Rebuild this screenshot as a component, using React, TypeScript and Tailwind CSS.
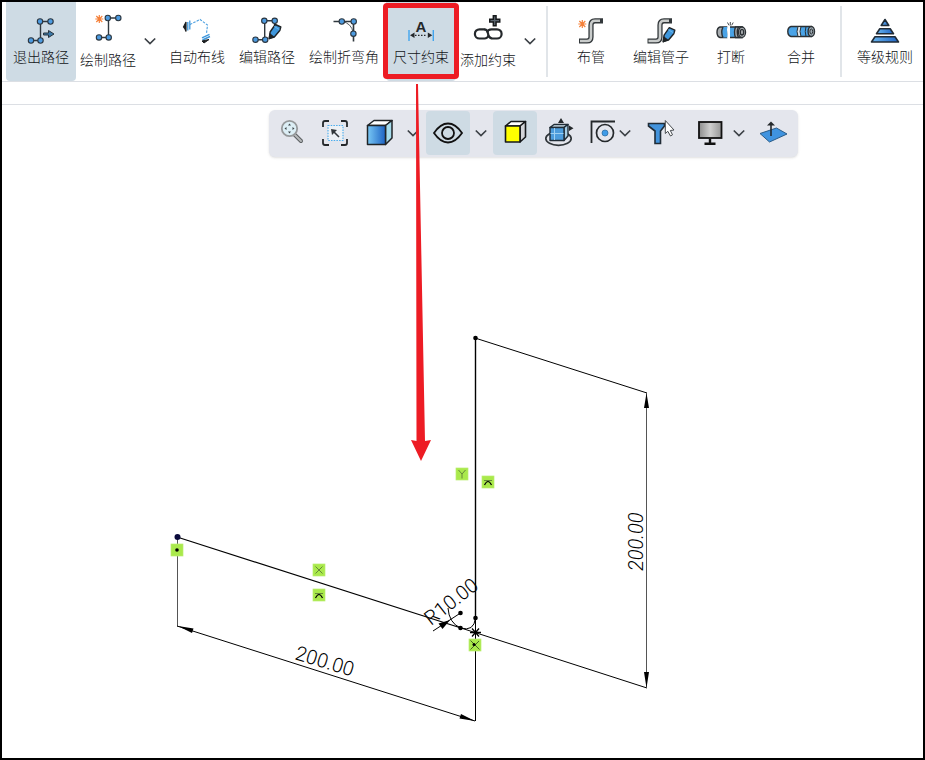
import type { ReactNode } from "react";

function Node({ x, y }: { x: number; y: number }) {
  return <circle cx={x} cy={y} r="2.7" fill="#4d9be0" stroke="#2b3640" strokeWidth="1.1" />;
}

function Spark({ x, y }: { x: number; y: number }) {
  return (
    <path
      transform={`translate(${x} ${y})`}
      d="M0-4V4M-4 0H4M-3-3L3 3M-3 3L3-3"
      stroke="#f5813a"
      strokeWidth="1.2"
    />
  );
}

function Pencil({ x, y }: { x: number; y: number }) {
  return (
    <g transform={`translate(${x} ${y})`} stroke="#1f2326" strokeWidth="1.4" strokeLinejoin="round">
      <path d="M0 0L.8-6.500L6-14L11.500-11.500L10.500-8L5-1.500Z" fill="#3f97dc" />
      <path d="M0 0L.6-4.500L4-1.800Z" fill="#1f2326" />
      <path d="M5-12L10-9" stroke="#6db9ef" strokeWidth="1" />
    </g>
  );
}

function Chevron() {
  return (
    <svg className="h-3 w-3" viewBox="0 0 12 12" fill="none" stroke="#3c4146" strokeWidth="1.7">
      <path d="M.8 3.500L6 8.500L11.200 3.500" />
    </svg>
  );
}

function Icon({ children }: { children: ReactNode }) {
  return (
    <svg className="h-8 w-8 shrink-0" viewBox="0 0 32 32" fill="none" aria-hidden="true">
      {children}
    </svg>
  );
}

function ToolButton({
  label,
  icon,
  width = "w-[70px]",
  active,
  marked,
  menu,
}: {
  label: string;
  icon: ReactNode;
  width?: string;
  active?: boolean;
  marked?: boolean;
  menu?: boolean;
}) {
  return (
    <div className="relative flex shrink-0">
      <button
        className={`flex flex-col items-center rounded-b pt-3 ${width} ${active ? "bg-[#cedbe4]" : ""} ${menu ? "gap-[3px]" : ""}`}
      >
        <Icon>{icon}</Icon>
        <span className="whitespace-nowrap text-sm leading-5">{label}</span>
      </button>
      {menu && (
        <button aria-label={`${label}选项`} className="flex w-5 items-center justify-center pb-0.5">
          <Chevron />
        </button>
      )}
      {marked && (
        <div className="pointer-events-none absolute -inset-x-[3px] top-px bottom-0.5 rounded-sm border-5 border-[#ed1c24]" />
      )}
    </div>
  );
}

function ViewButton({
  label,
  width = "w-11",
  active,
  children,
}: {
  label: string;
  width?: string;
  active?: boolean;
  children: ReactNode;
}) {
  return (
    <button
      aria-label={label}
      className={`flex h-11 shrink-0 items-center justify-center rounded-sm ${width} ${active ? "bg-[#cedbe4]" : ""}`}
    >
      {children}
    </button>
  );
}

function Badge({ x, y, children }: { x: number; y: number; children: ReactNode }) {
  return (
    <g transform={`translate(${x} ${y})`}>
      <rect width="12" height="12" fill="#a9e94b" stroke="#b9ed70" strokeWidth=".7" />
      {children}
    </g>
  );
}

function Ribbon() {
  return (
    <header className="flex h-20 border-b border-[#dcdfe4] pl-1">
      <div className="flex pr-1.5">
        <ToolButton
          label="退出路径"
          active
          icon={
            <>
              <path d="M25 7.500H15.500V26.500H6" stroke="#30383e" strokeWidth="1.4" />
              <Node x={15} y={7.5} />
              <Node x={25.5} y={7.5} />
              <Node x={6} y={26.5} />
              <Node x={15.5} y={26.5} />
              <path d="M18.500 19h5v-2.500l5.500 3.500l-5.500 3.500v-2.500h-5z" fill="#3a78a8" stroke="#28343d" strokeWidth="1" />
            </>
          }
        />
        <ToolButton
          label="绘制路径"
          width="w-16"
          menu
          icon={
            <>
              <path d="M26 4H16.500V23.500H7" stroke="#30383e" strokeWidth="1.4" />
              <Node x={15.8} y={4} />
              <Node x={26.3} y={4} />
              <Node x={7} y={23.4} />
              <Node x={16.7} y={23.4} />
              <Spark x={7.3} y={5} />
            </>
          }
        />
        <div className="w-0.5" />
        <ToolButton
          label="自动布线"
          icon={
            <>
              <path d="M9 10.500L19 5.500L26.500 11L25.500 19.500" stroke="#4a9fe0" strokeWidth="1.1" strokeDasharray="2.500 1.200" />
              <path d="M6.800 8V16.500M8.800 6.500V15.500" stroke="#3f97dc" strokeWidth="1.300" />
              <path d="M2.500 13L5 8V17.500L4 15Z" fill="#1c1f21" stroke="#1c1f21" strokeWidth="1.2" />
              <path d="M21 23.800L28.500 20.300M21.500 26L29 22.500" stroke="#3f97dc" strokeWidth="1.4" />
              <path d="M21 27L28 25.500L23 29Z" fill="#1c1f21" stroke="#1c1f21" strokeWidth="1" />
            </>
          }
        />
        <ToolButton
          label="编辑路径"
          icon={
            <>
              <path d="M23.500 6.800H13.700V25.700H4.500M23.500 7V11" stroke="#30383e" strokeWidth="1.4" />
              <Node x={13.3} y={6.8} />
              <Node x={23.7} y={6.8} />
              <Node x={4.5} y={25.7} />
              <Node x={14.2} y={25.7} />
              <Pencil x={18.3} y={24.5} />
            </>
          }
        />
        <ToolButton
          label="绘制折弯角"
          width="w-[84px]"
          icon={
            <>
              <path d="M5.500 7.500H25.500V27.500" stroke="#30383e" strokeWidth="1.6" />
              <path d="M14 7.500Q23.500 9 25.300 19" stroke="#555d63" strokeWidth="1" />
              <Node x={13.8} y={7.5} />
              <Node x={25.7} y={7.5} />
              <Node x={25.4} y={19.7} />
            </>
          }
        />
        <ToolButton
          label="尺寸约束"
          active
          marked
          icon={
            <>
              <text x="16" y="18" textAnchor="middle" fontSize="15" fontWeight="700" fontFamily="Liberation Sans, sans-serif" fill="#24282b">
                A
              </text>
              <path d="M4 16V27M28.300 16V27" stroke="#42a5ee" strokeWidth="1.4" />
              <path d="M10 21.300H22" stroke="#24282b" strokeWidth="1.2" strokeDasharray="1.500 1.500" />
              <path d="M5 21.300L9.500 18.500V24ZM27.300 21.300L22.800 18.500V24Z" fill="#24282b" />
            </>
          }
        />
        <ToolButton
          label="添加约束"
          width="w-16"
          menu
          icon={
            <>
              <path d="M22.700 1V12.500M17 6.700H28.500" stroke="#16191b" strokeWidth="4.200" />
              <path d="M22.700 2.500V11M18.500 6.700H27" stroke="#5b6670" strokeWidth="1.2" />
              <g stroke="#24282b" strokeWidth="2.200">
                <path d="M12.500 15.300H7.500A4.600 4.600 0 0 0 7.500 24.500H12.500Q15.500 24.500 16.500 21.500" />
                <path d="M19.500 24.500H25A4.600 4.600 0 0 0 25 15.300H19.500Q16 15.300 15 18.500" />
                <path d="M12 15.300Q15.500 15.300 16 19.500T20 24.500" />
              </g>
            </>
          }
        />
      </div>
      <div className="my-1 w-0.5 bg-[#e1e5e9]" />
      <div className="flex pr-1 pl-2">
        <ToolButton
          label="布管"
          icon={
            <>
              <path d="M4 27H12Q16 27 16 23V11Q16 6.800 20 6.800H28" stroke="#33383b" strokeWidth="5.2" />
              <path d="M5 27H12Q16 27 16 23V11Q16 6.800 20 6.800H25" stroke="#c9cccb" strokeWidth="2.600" />
              <Spark x={7.3} y={10} />
            </>
          }
        />
        <ToolButton
          label="编辑管子"
          icon={
            <>
              <path d="M2.500 27H11Q15 27 15 23V11Q15 6.800 19 6.800H27" stroke="#33383b" strokeWidth="5.2" />
              <path d="M3.500 27H11Q15 27 15 23V11Q15 6.800 19 6.800H24" stroke="#c9cccb" strokeWidth="2.600" />
              <Pencil x={18.3} y={27.7} />
            </>
          }
        />
        <ToolButton
          label="打断"
          icon={
            <>
              <g stroke="#2b3034" strokeWidth="1.400">
                <path d="M12.500 13H5Q2 14 2 18.200Q2 22.500 5 23.500H12.500" fill="#a8adb0" />
                <path d="M13 13H8Q5.500 18.200 8 23.500H13L12 18.500Z" fill="#4aa3e6" stroke="none" />
                <path d="M8 13Q5.500 18.200 8 23.500" />
                <path d="M15 13H27V23.500H15" fill="#4aa3e6" />
                <path d="M20.500 13H27V23.500H20.500Q18.500 18.200 20.500 13Z" fill="#a8adb0" />
                <path d="M23.500 13Q21 18.200 23.500 23.500" />
                <ellipse cx="27" cy="18.200" rx="3.500" ry="5.200" fill="#b9bdc0" />
                <ellipse cx="27" cy="18.200" rx="1.600" ry="2.800" />
              </g>
              <path d="M13.500 12L12.800 16L14 19L13 24.500" stroke="#fff" strokeWidth="1.600" />
              <path d="M15.300 8V11.500M12.500 8.500L14 11.300M18.200 8.500L16.700 11.300" stroke="#44494d" strokeWidth="1" />
            </>
          }
        />
        <ToolButton
          label="合并"
          icon={
            <g stroke="#2b3034" strokeWidth="1.400">
              <path d="M6 12.500H26V22.500H6Q2.800 21.500 2.800 17.500Q2.800 13.500 6 12.500Z" fill="#4aa3e6" />
              <path d="M13 12.500Q11 17.500 13 22.500H16Q14 17.500 16 12.500Z" fill="#e3e7e9" strokeWidth="1" />
              <path d="M21 12.500Q19.500 17.500 21 22.500" strokeWidth="1" />
              <ellipse cx="26.300" cy="17.500" rx="3.200" ry="5" fill="#9da9b2" />
              <ellipse cx="26.300" cy="17.500" rx="1.400" ry="2.500" strokeWidth="1" />
            </g>
          }
        />
      </div>
      <div className="my-1 w-0.5 bg-[#e1e5e9]" />
      <div className="flex pl-2">
        <ToolButton
          label="等级规则"
          icon={
            <>
              <defs>
                <linearGradient id="level">
                  <stop offset="0" stopColor="#6cb8f0" />
                  <stop offset="1" stopColor="#2064c4" />
                </linearGradient>
              </defs>
              <g fill="url(#level)" stroke="#202b36" strokeWidth="1.600" strokeLinejoin="round">
                <path d="M16 5.500L19.800 11.500H12.200Z" />
                <path d="M10.800 14.800H21.200L24.500 19.800H7.500Z" />
                <path d="M6 22.800H26L29.500 28H2.500Z" />
              </g>
            </>
          }
        />
      </div>
    </header>
  );
}

function ViewBar() {
  return (
    <div className="relative z-10 ml-[267px] flex w-[529px] rounded-md bg-[#e4e6ed] pt-px pb-0.5 shadow-sm">
      <ViewButton label="缩放">
        <Icon>
          <path d="M20 18L26 24" stroke="#5b5f61" strokeWidth="4" strokeLinecap="round" />
          <path d="M20 18L26 24" stroke="#b7babb" strokeWidth="2" strokeLinecap="round" />
          <circle cx="14.500" cy="11.500" r="7.700" fill="#dceef5" stroke="#96999b" strokeWidth="1.800" />
          <path d="M14.500 6.500L16 8.500H13ZM14.500 16.500L16 14.500H13ZM9.500 11.500L11.500 10V13ZM19.500 11.500L17.500 10V13Z" fill="#3e464b" />
        </Icon>
      </ViewButton>
      <ViewButton label="适合窗口">
        <Icon>
          <path
            d="M4 10V6Q4 4 6 4H10M22 4H26Q28 4 28 6V10M28 22V26Q28 28 26 28H22M10 28H6Q4 28 4 26V22"
            stroke="#24282b"
            strokeWidth="1.800"
          />
          <rect x="9" y="8.500" width="15" height="15" fill="#edf1f5" stroke="#4aaced" strokeWidth="1.100" strokeDasharray="1.500 1.200" />
          <path d="M15 15L20 20" stroke="#33383b" strokeWidth="1.600" />
          <path d="M12 12L18 13L13 18Z" fill="#33383b" />
        </Icon>
      </ViewButton>
      <ViewButton label="显示样式">
        <Icon>
          <defs>
            <linearGradient id="front">
              <stop offset="0" stopColor="#79c8f5" />
              <stop offset="1" stopColor="#1d63c4" />
            </linearGradient>
          </defs>
          <g stroke="#202427" strokeWidth="1.500" strokeLinejoin="round">
            <path d="M4.500 8.500L11 3.500H29L22.500 8.500Z" fill="#fff" />
            <path d="M22.500 8.500L29 3.500V21L22.500 27.500Z" fill="#a7dcec" />
            <path d="M4.500 8.500H22.500V27.500H4.500Z" fill="url(#front)" />
          </g>
        </Icon>
      </ViewButton>
      <ViewButton label="显示样式选项" width="w-6">
        <Chevron />
      </ViewButton>
      <div className="w-px" />
      <ViewButton label="可见性" active>
        <Icon>
          <path d="M2 16Q8.500 6.500 16 6.500T30 16Q23.500 25.500 16 25.500T2 16Z" stroke="#111" strokeWidth="1.800" />
          <circle cx="16" cy="16" r="6" stroke="#111" strokeWidth="1.800" />
        </Icon>
      </ViewButton>
      <ViewButton label="可见性选项" width="w-[22px]">
        <Chevron />
      </ViewButton>
      <div className="w-px" />
      <ViewButton label="着色" active>
        <Icon>
          <g stroke="#16191b" strokeWidth="1.600" strokeLinejoin="round">
            <path d="M6.500 9L12 4.500H26.500L21 9Z" fill="#fff" />
            <path d="M21 9L26.500 4.500V20L21 25Z" fill="#d2d4d8" />
            <path d="M6.500 9H21V25H6.500Z" fill="#ff0" />
          </g>
        </Icon>
      </ViewButton>
      <ViewButton label="旋转视图">
        <Icon>
          <ellipse cx="15.500" cy="21.500" rx="12.700" ry="6.800" stroke="#30363a" strokeWidth="1.700" />
          <g stroke="#202c36" strokeWidth="1.400" strokeLinejoin="round">
            <path d="M7 10.500L11 7.500H25L21 10.500Z" fill="#d4e8f3" />
            <path d="M21 10.500L25 7.500V19L21 23.500Z" fill="#a8cfe5" />
            <path d="M7 10.500H21V23.500H7Z" fill="#4c9cdc" />
          </g>
          <path d="M11.500 11V23M7.500 16.500H20.500" stroke="#9dd0f3" strokeWidth="1" />
          <path d="M18 1L21 6H15ZM30.500 11.300L26 8.500V14Z" fill="#24282b" />
        </Icon>
      </ViewButton>
      <ViewButton label="剖面" width="w-[38px]">
        <Icon>
          <path d="M7.500 26V4.500H31" stroke="#24282b" strokeWidth="1.800" />
          <circle cx="21" cy="16" r="8.500" stroke="#24282b" strokeWidth="1.700" />
          <circle cx="21" cy="16" r="3" fill="#3e9be8" stroke="#2f6ea4" strokeWidth=".8" />
        </Icon>
      </ViewButton>
      <ViewButton label="剖面选项" width="w-5 justify-start">
        <Chevron />
      </ViewButton>
      <ViewButton label="选择过滤器">
        <Icon>
          <path d="M3.500 6.500H19.500V9L15.500 14V26.500H10V14L3.500 9Z" fill="#4293dc" stroke="#202c36" strokeWidth="1.600" />
          <path d="M20.300 3.500V16.500L22.800 14.300L25.500 19L27.500 17.800L25.300 13.500L29 13Z" fill="#fff" stroke="#44494d" strokeWidth="1" />
        </Icon>
      </ViewButton>
      <div className="w-[5px]" />
      <ViewButton label="显示器">
        <Icon>
          <defs>
            <linearGradient id="screen">
              <stop offset="0" stopColor="#8d8d8d" />
              <stop offset=".5" stopColor="#cfcfcf" />
              <stop offset="1" stopColor="#969696" />
            </linearGradient>
          </defs>
          <rect x="5" y="5" width="22.500" height="16" fill="url(#screen)" stroke="#111" strokeWidth="1.800" />
          <path d="M16 21.500V26M10.500 26.800H21.500" stroke="#111" strokeWidth="2.400" />
        </Icon>
      </ViewButton>
      <ViewButton label="显示器选项" width="w-5 justify-start pl-px">
        <Chevron />
      </ViewButton>
      <ViewButton label="正视于">
        <Icon>
          <path d="M2 16.500L18.500 11L29 17L11.500 25Z" fill="#3f93df" stroke="#2a5c88" strokeWidth="1" />
          <path d="M13 19V6" stroke="#24282b" strokeWidth="1.600" />
          <path d="M9 8.500L13 4.500L17 8.500Z" fill="#24282b" />
        </Icon>
      </ViewButton>
    </div>
  );
}

function Sketch() {
  return (
    <svg className="absolute inset-0 h-full w-full" fill="none" stroke="#000" strokeWidth="1">
      {/* path */}
      <path d="M175 432L459 523" strokeWidth="1.2" />
      <path d="M473.500 233V513" strokeWidth="1.4" />
      <path d="M446 503Q447 518 458.500 523Q472 527 473.500 513" />
      <path d="M459 523L645 583M473.500 513V616" />

      {/* vertical dimension */}
      <path d="M473 233L645 288" />
      <path d="M644.500 288V583" stroke="#555" />
      <path d="M644.500 288L647 303H642ZM644.500 583L647 567H642Z" fill="#000" stroke="none" />

      {/* bottom dimension */}
      <path d="M175.500 432V521.500" stroke="#555" />
      <path d="M175 521L473 616" />
      <path d="M176 521L191.500 523.500L190 528ZM473 616L457.500 613.500L459 609Z" fill="#000" stroke="none" />

      {/* radius */}
      <path d="M431 526L458.500 508" />
      <path d="M448 515L440.500 524L436.500 518.500Z" fill="#000" stroke="none" />
      <g fill="#000" stroke="none">
        <circle cx="473.500" cy="233" r="2.300" />
        <circle cx="458.500" cy="508" r="2.300" />
        <circle cx="458.500" cy="523" r="2.300" />
        <circle cx="473.500" cy="513" r="2.300" />
        <circle cx="175.500" cy="432" r="3" fill="#0a0a3c" />
      </g>
      <path d="M468 527.500H479M470 523.500L477 531.500M470 531.500L477 523.500" strokeWidth="1.3" />

      <g className="font-['Roboto',sans-serif] text-[20px] font-light" fill="#000" stroke="none">
        <text transform="translate(292 554) rotate(17)">200.00</text>
        <text transform="translate(641 466) rotate(-90)" fontStyle="italic">
          200.00
        </text>
        <text transform="translate(429 521) rotate(-38)">R10.00</text>
      </g>

      {/* constraint markers */}
      <Badge x={169} y={439}>
        <circle cx="6" cy="6" r="1.800" fill="#000" stroke="none" />
      </Badge>
      <Badge x={311} y={459}>
        <path d="M2.500 2.500L9.500 9.500M2.500 9.500L9.500 2.500" stroke="#64873a" />
      </Badge>
      <Badge x={311} y={484}>
        <path d="M2 4.500H10" stroke="#64873a" />
        <path d="M2.500 9Q6 2 9.500 9" strokeWidth="1.2" />
      </Badge>
      <Badge x={454} y={363}>
        <path d="M2.500 2L6 6V10.500M9.500 2L6 6" stroke="#64873a" />
      </Badge>
      <Badge x={480} y={371}>
        <path d="M2 4.500H10" stroke="#64873a" />
        <path d="M2.500 9Q6 2 9.500 9" strokeWidth="1.2" />
      </Badge>
      <Badge x={467} y={534}>
        <path d="M1.500 1.500L10.500 10.500M1.500 10.500L10 2" stroke="#476427" />
        <circle cx="5" cy="5.500" r="1.500" fill="#000" stroke="none" />
      </Badge>
    </svg>
  );
}

export default function App() {
  return (
    <div className="relative flex min-h-screen flex-col overflow-hidden border-2 border-black bg-white font-['Noto_Sans_CJK_SC',sans-serif] font-light text-[#111417]">
      <Ribbon />
      <div className="h-[23px] border-b border-[#dcdfe4]" />
      <main className="relative flex-1 pt-[5px]">
        <Sketch />
        <ViewBar />
      </main>
      <svg className="pointer-events-none absolute inset-0 z-20 h-full w-full" aria-hidden="true">
        <path d="M414 82H416L423 439L429 438L419 459L409 438L414.500 439Z" fill="#ed1c24" />
      </svg>
    </div>
  );
}
